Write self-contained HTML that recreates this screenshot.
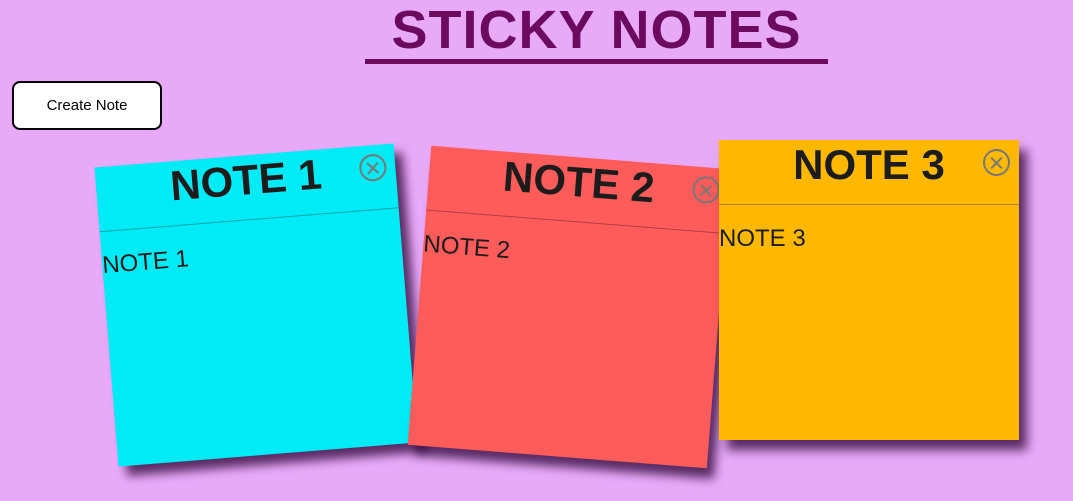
<!DOCTYPE html>
<html><head><meta charset="utf-8"><style>
html,body{margin:0;padding:0;}
body{width:1073px;height:501px;background:#e8a9f9;position:relative;overflow:hidden;font-family:"Liberation Sans",sans-serif;}
h1{position:absolute;left:345px;top:2px;margin:0;width:503px;text-align:center;white-space:nowrap;font-family:"Liberation Sans",sans-serif;font-weight:bold;font-size:54px;color:#6b0a5e;letter-spacing:1px;line-height:56px;}
.ul{position:absolute;left:365px;top:59px;width:463px;height:5px;background:#6b0a5e;}
.btn{position:absolute;left:12px;top:81px;width:146px;height:45px;border:2px solid #000;border-radius:8px;background:#fff;font-size:15px;text-align:center;line-height:45px;font-family:"Liberation Sans Narrow","Liberation Sans",sans-serif;}
.note{position:absolute;width:300px;height:300px;box-shadow:8px 10px 10px rgba(40,0,50,.75);}
.hd{height:64px;border-bottom:1px solid rgba(0,0,0,.3);text-align:center;font-size:42px;font-weight:bold;line-height:50px;color:#1c1c1c;position:relative;font-family:"Liberation Sans Narrow","Liberation Sans",sans-serif;}
.x{position:absolute;right:9px;top:9px;width:23px;height:23px;border:2px solid #777;border-radius:50%;}
.x:before,.x:after{content:"";position:absolute;left:4px;top:10.5px;width:15px;height:2px;background:#777;transform:rotate(45deg);}
.x:after{transform:rotate(-45deg);}
.bd{font-size:24px;padding-top:20px;color:#1c1c1c;font-family:"Liberation Sans Narrow","Liberation Sans",sans-serif;}
</style></head><body>
<h1>STICKY NOTES</h1><div class="ul"></div>
<div class="btn">Create Note</div>
<div class="note" style="left:106px;top:155px;background:#00ebf5;transform:rotate(-4.6deg)"><div class="hd">NOTE 1<div class="x"></div></div><div class="bd">NOTE 1</div></div>
<div class="note" style="left:419px;top:157px;background:#fe5b5b;transform:rotate(4.5deg)"><div class="hd">NOTE 2<div class="x"></div></div><div class="bd">NOTE 2</div></div>
<div class="note" style="left:719px;top:140px;background:#ffb800;"><div class="hd">NOTE 3<div class="x"></div></div><div class="bd">NOTE 3</div></div>
</body></html>
